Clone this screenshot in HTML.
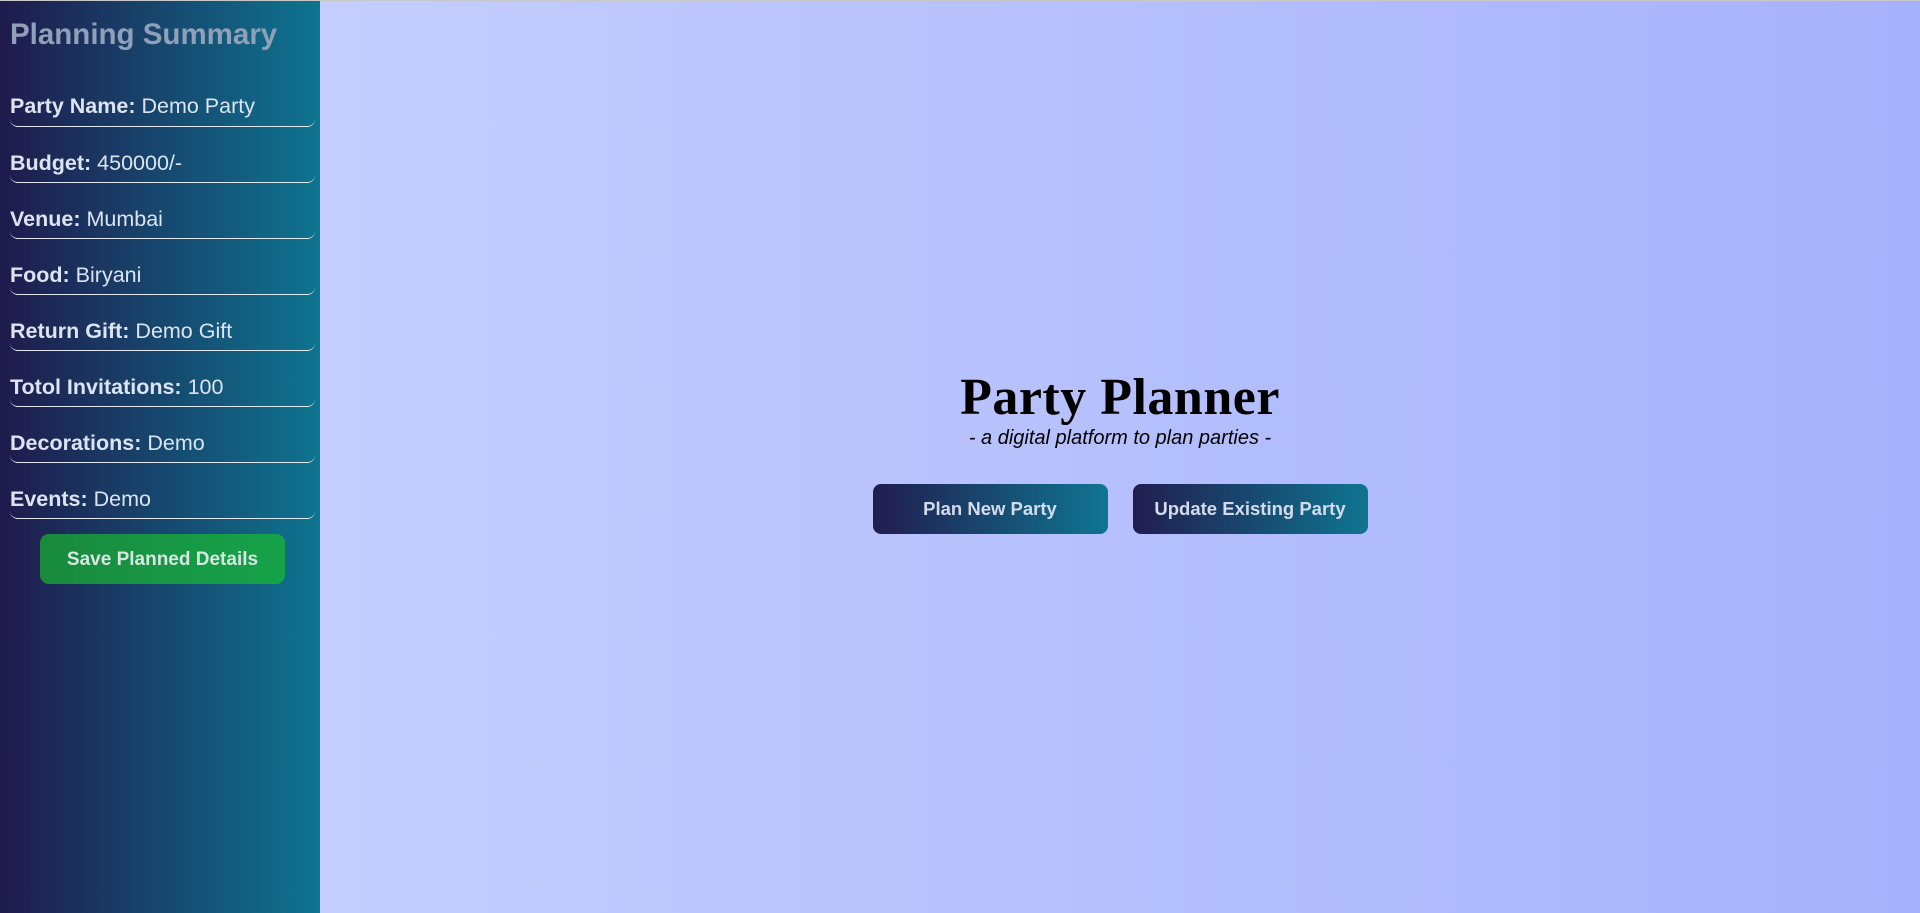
<!DOCTYPE html>
<html><head><meta charset="utf-8"><style>
*{margin:0;padding:0;box-sizing:border-box}
html,body{width:1920px;height:913px;overflow:hidden}
body{font-family:"Liberation Sans",sans-serif;display:flex;border-top:1px solid #c8c8c8;background:linear-gradient(90deg,#c9d3fe,#a7b2fc)}
.side{width:320px;height:912px;background:linear-gradient(90deg,#1f1a4c,#0e7490);padding:0 6px 0 10px;color:#dbe4f0}
.side h2{font-size:29.5px;color:#8fa0b8;margin-top:17px;height:56px;font-weight:bold}
.item{font-size:21.5px;height:56px;border-bottom:1.5px solid #e2e8f0;border-radius:0 0 8px 8px;padding-top:24px;width:305px}
.item b{font-weight:bold}
.save{display:block;margin:15px 0 0 30px;width:245px;height:50px;border-radius:9px;background:linear-gradient(90deg,#198a3c,#16a34a);color:#d6e6e0;font-weight:bold;font-size:19px;text-align:center;line-height:52px}
.main{flex:1;position:relative}
.center{position:absolute;left:0;right:0;top:368px;text-align:center}
h1{font-family:"Liberation Serif",serif;font-size:52px;font-weight:bold;line-height:58px;color:#000;letter-spacing:0.5px}
.sub{font-style:italic;font-size:20px;margin-top:0}
.btns{margin-top:34px;display:flex;justify-content:center;gap:25px}
.btn{width:235px;height:50px;border-radius:8px;background:linear-gradient(90deg,#211d4f,#0f7591);color:#d3dcec;font-weight:bold;font-size:18.5px;line-height:50px;text-align:center}
</style></head><body>
<div class="side">
<h2>Planning Summary</h2>
<div class="item" style="padding-top:20px;height:53px"><b>Party Name:</b> Demo Party</div>
<div class="item"><b>Budget:</b> 450000/-</div>
<div class="item"><b>Venue:</b> Mumbai</div>
<div class="item"><b>Food:</b> Biryani</div>
<div class="item"><b>Return Gift:</b> Demo Gift</div>
<div class="item"><b>Totol Invitations:</b> 100</div>
<div class="item"><b>Decorations:</b> Demo</div>
<div class="item"><b>Events:</b> Demo</div>
<div class="save">Save Planned Details</div>
</div>
<div class="main"><div class="center">
<h1>Party Planner</h1>
<div class="sub">- a digital platform to plan parties -</div>
<div class="btns"><div class="btn">Plan New Party</div><div class="btn">Update Existing Party</div></div>
</div></div>
</body></html>
